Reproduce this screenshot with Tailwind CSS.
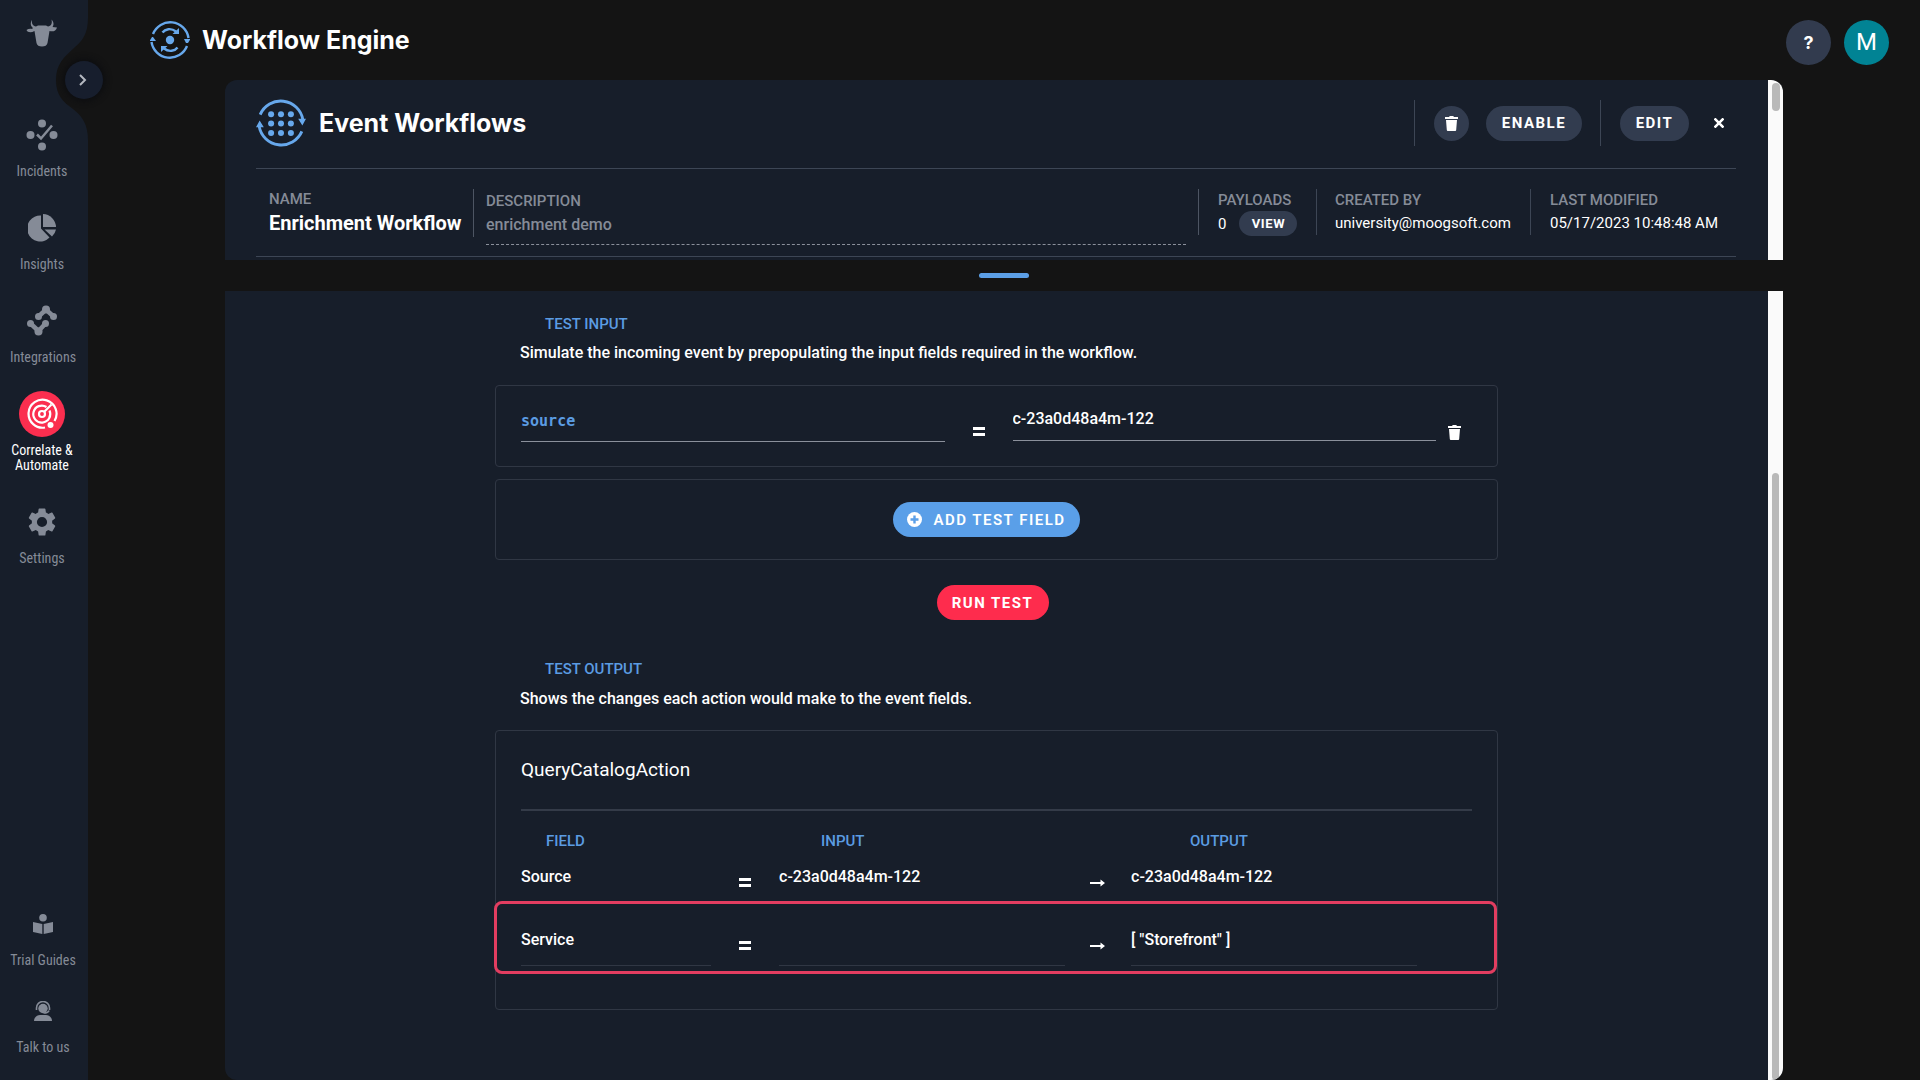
<!DOCTYPE html>
<html lang="en">
<head>
<meta charset="utf-8">
<title>Workflow Engine</title>
<script src="https://cdn.jsdelivr.net/npm/@tailwindcss/browser@4"></script>
</head>
<body class="flex min-h-screen bg-[#141414] font-[Roboto,sans-serif] text-white">

<!-- shared shapes -->
<svg class="hidden">
  <symbol id="trash" viewBox="0 0 13 15"><path fill="currentColor" d="M0 1h4l.8-1h3.4L9 1h4v2H0zM1 4h11l-.8 10a1 1 0 0 1-1 1H2.800a1 1 0 0 1-1-1z"/></symbol>
  <symbol id="equals" viewBox="0 0 12 9"><path fill="currentColor" d="M0 0h12v3H0zM0 6h12v3H0z"/></symbol>
  <symbol id="arrow" viewBox="0 0 15 8"><path fill="currentColor" d="M0 3h10.500V.5L15 4l-4.500 3.500V5H0z"/></symbol>
</svg>

<aside class="relative flex w-22 shrink-0 flex-col bg-[#171e2a] text-[#858b97]">
  <svg class="absolute top-0 right-0 h-[145px] w-8" viewBox="0 0 32 145"><path fill="#141414" d="M32 18C32 34 26 41 19 47C8 57 0 64 0 80C0 95 7 102 17 109C26 116 32 124 32 140Z"/></svg>
  <button aria-label="Expand menu" class="absolute top-[61px] left-[65px] flex size-[38px] items-center justify-center rounded-full bg-[#171e2d] pr-0.5 shadow-[0_0_6px_2px_#0c0d10]">
    <svg class="h-3 w-2" viewBox="0 0 8 12" fill="none" stroke="#b4b8c0" stroke-width="2"><path d="M1 1l5 5-5 5"/></svg>
  </button>

  <a href="#" aria-label="Home" class="mt-[18px] flex h-[30px] justify-center pr-1">
    <svg class="h-[29px] w-8" viewBox="0 0 32 29" fill="currentColor"><path d="M6 2C5.500 6 7 8 10 8.500L12 7.500H20L22 8.500C25 8 26.500 6 25.500 1.500C28 4 28 7 26.500 9L31 9.500C30 13 27 14 23.500 13L22.500 19L21.500 25C21 27.500 19 28.500 16 28.500C13 28.500 11 27.500 10.500 25L9.500 19L8.500 13C5 15 1.500 14.500 .5 12C2 11 4 10.500 6 11L7 10C4.500 8 4 5 6 2Z"/></svg>
  </a>

  <nav class="mt-16 flex flex-col gap-[26px] pr-1 text-center text-sm leading-[15px] font-[Roboto_Condensed,Roboto,sans-serif]">
    <a href="#" class="flex flex-col items-center gap-1.5">
      <span class="flex size-[46px] items-center justify-center"><svg class="size-8" viewBox="0 0 32 32" fill="currentColor"><circle cx="16" cy="4.500" r="4"/><circle cx="4.500" cy="16" r="4"/><circle cx="27.500" cy="16" r="4"/><circle cx="16" cy="27.500" r="4"/><path d="M11 15.500l4 4L26 6.500" fill="none" stroke="currentColor" stroke-width="2.500"/></svg></span>
      <span>Incidents</span>
    </a>
    <a href="#" class="flex flex-col items-center gap-1.5">
      <span class="flex size-[46px] items-center justify-center"><svg class="size-7" viewBox="0 0 28 28" fill="currentColor"><path d="M13 1.500V14.500L21.500 23.500A13 13 0 1 1 13 1.500Z"/><path d="M15 0A13.500 13.500 0 0 1 28 13H15Z"/><path d="M16.500 15.500H28A13 13 0 0 1 24 22.500Z"/></svg></span>
      <span>Insights</span>
    </a>
    <a href="#" class="flex flex-col items-center gap-1.5">
      <span class="flex size-[46px] items-center justify-center"><svg class="size-8" viewBox="0 0 32 32" fill="currentColor" stroke="currentColor"><g stroke="none"><circle cx="4.500" cy="18.500" r="3.500"/><circle cx="12.500" cy="26.500" r="4"/><circle cx="19.500" cy="18.500" r="3.500"/><circle cx="12.500" cy="11.500" r="3.500"/><circle cx="20" cy="4.500" r="4"/><circle cx="27.500" cy="11.500" r="3.500"/></g><path d="M4.500 18.500l8 7.500 7-7.500M12.500 11.500l7.500-7 7.500 7" fill="none" stroke-width="4.500"/></svg></span>
      <span class="pl-0.5">Integrations</span>
    </a>
    <a href="#" aria-current="page" class="flex flex-col items-center gap-1.5 text-white">
      <span class="flex size-[46px] items-center justify-center rounded-full bg-[#fb2e4f]"><svg class="size-8" viewBox="0 0 32 32" fill="none" stroke="currentColor" stroke-width="2.200"><path d="M19 29.500A14 14 0 1 1 28.500 23"/><path d="M20.500 9A8.500 8.500 0 1 0 23.500 12.500"/><circle cx="16" cy="16" r="3"/><path d="M18 14L25.500 6.500"/><circle cx="24.500" cy="27" r="3" fill="currentColor" stroke="none"/></svg></span>
      <span>Correlate &amp;<br>Automate</span>
    </a>
    <a href="#" class="flex flex-col items-center gap-1.5">
      <span class="flex size-[46px] items-center justify-center"><svg class="size-[34px]" viewBox="0 0 24 24" fill="currentColor"><path d="M19.140 12.940c.04-.3.060-.61.060-.94s-.02-.64-.07-.94l2.030-1.580a.49.49 0 0 0 .12-.61l-1.920-3.320a.49.49 0 0 0-.59-.22l-2.390.96a7 7 0 0 0-1.620-.94l-.36-2.540a.48.48 0 0 0-.48-.41h-3.840a.48.48 0 0 0-.47.410l-.36 2.540c-.59.240-1.130.570-1.620.94l-2.390-.96a.48.48 0 0 0-.59.220L2.740 8.870a.48.48 0 0 0 .12.610l2.030 1.580a6 6 0 0 0 0 1.880l-2.030 1.580a.49.49 0 0 0-.12.610l1.920 3.320c.12.220.370.290.59.220l2.390-.96c.5.380 1.030.7 1.620.94l.36 2.540c.05.240.240.410.48.410h3.840c.24 0 .44-.17.470-.41l.36-2.540a7 7 0 0 0 1.620-.94l2.390.96c.22.080.470 0 .59-.22l1.920-3.320a.48.48 0 0 0-.12-.61zM12 15.600a3.600 3.600 0 1 1 0-7.200 3.600 3.600 0 0 1 0 7.200z"/></svg></span>
      <span>Settings</span>
    </a>
  </nav>

  <nav class="mt-auto flex flex-col gap-5 pr-0.5 pb-[25px] text-center text-sm leading-[15px] font-[Roboto_Condensed,Roboto,sans-serif]">
    <a href="#" class="flex flex-col items-center gap-1.5">
      <span class="flex size-[46px] items-center justify-center"><svg class="size-5" viewBox="0 0 20 20" fill="currentColor"><circle cx="10" cy="3.800" r="3.800"/><path d="M0 8l9.300 2v10L0 18zM20 8l-9.300 2v10L20 18z"/></svg></span>
      <span>Trial Guides</span>
    </a>
    <a href="#" class="flex flex-col items-center gap-1.5">
      <span class="flex size-[46px] items-center justify-center"><svg class="h-5 w-[18px]" viewBox="0 0 18 20" fill="currentColor"><circle cx="9" cy="7.500" r="4.700"/><path d="M2.500 9V7A6.500 6.500 0 0 1 15.500 7V9M15 9.500C14.500 11.500 12 12 9.500 12" fill="none" stroke="currentColor" stroke-width="1.600"/><path d="M0 20C0 16.500 3 14 6 14h6c3 0 6 2.500 6 6z"/></svg></span>
      <span>Talk to us</span>
    </a>
  </nav>
</aside>

<div class="flex min-w-0 flex-1 flex-col">
  <header class="flex h-20 items-center pr-[31px] pl-[62px]">
    <svg class="size-10" viewBox="0 0 40 40" fill="none" stroke="#67a8ec" stroke-width="2.400"><path d="M3 14A18.500 18.500 0 0 1 38.500 18"/><path d="M37 26A18.500 18.500 0 0 1 1.500 22"/><path d="M12.500 12.500C15 9 21 7.500 26 11.500M27.500 27.500C25 31 19 32.500 14 28.500"/><g fill="#67a8ec" stroke="none"><circle cx="20" cy="20" r="4.200"/><path d="M34 19h6.500l-2.500 4h-2zM-.5 21h6.500l-3-4h-1zM29 8v6h-6.500zM11 32v-6h6.500z"/></g></svg>
    <h1 class="ml-3 font-[Inter,sans-serif] text-[25px] leading-8 font-bold">Workflow Engine</h1>
    <div class="ml-auto flex gap-[13px] pt-1">
      <button aria-label="Help" class="size-[45px] rounded-full bg-[#323b4e] pt-0.5 font-[Inter,sans-serif] text-lg font-bold">?</button>
      <button aria-label="Account" class="size-[45px] rounded-full bg-[#018394] text-2xl">M</button>
    </div>
  </header>

  <main class="flex flex-1 flex-col px-[137px]">
    <section class="flex overflow-hidden rounded-t-xl bg-[#171e2a]">
      <div class="flex h-[180px] min-w-0 flex-1 flex-col pr-8 pl-[31px]">
        <div class="flex h-[89px] items-center border-b border-[#3d4655] pb-0.5">
          <svg class="size-[50px]" viewBox="0 0 48 48" fill="none" stroke="#67a8ec" stroke-width="2.800"><path d="M4 16A21.500 21.500 0 0 1 45 21"/><path d="M44 32A21.500 21.500 0 0 1 3 27"/><g fill="#67a8ec" stroke="none"><path d="M40.500 20h7.500l-3.500 6.500zM0 28h7.500l-4-6.500z"/><circle cx="14.500" cy="15.500" r="2.900"/><circle cx="24" cy="15.500" r="2.900"/><circle cx="33.500" cy="15.500" r="2.900"/><circle cx="14.500" cy="24.500" r="2.900"/><circle cx="24" cy="24.500" r="2.900"/><circle cx="33.500" cy="24.500" r="2.900"/><circle cx="14.500" cy="33.500" r="2.900"/><circle cx="24" cy="33.500" r="2.900"/><circle cx="33.500" cy="33.500" r="2.900"/></g></svg>
          <h2 class="ml-[13px] font-[Inter,sans-serif] text-[25px] leading-8 font-bold">Event Workflows</h2>
          <div class="ml-auto flex items-center text-[15px] font-bold tracking-widest">
            <span class="h-[46px] w-px bg-[#3d4655]"></span>
            <button aria-label="Delete workflow" class="ml-[19px] flex size-[35px] items-center justify-center rounded-full bg-[#323c4f]"><svg class="h-[15px] w-[13px]"><use href="#trash"/></svg></button>
            <button class="ml-[17px] h-[35px] w-24 rounded-full bg-[#323c4f]">ENABLE</button>
            <span class="ml-[18px] h-[46px] w-px bg-[#3d4655]"></span>
            <button class="ml-[19px] h-[35px] w-[69px] rounded-full bg-[#323c4f]">EDIT</button>
            <button aria-label="Close" class="mr-3 ml-[25px]"><svg class="size-[10px]" viewBox="0 0 10 10" stroke="currentColor" stroke-width="2.600"><path d="M.5.5l9 9M9.500.5l-9 9"/></svg></button>
          </div>
        </div>

        <div class="flex h-[88px] items-start border-b border-[#3d4655] pt-5 pl-[13px] leading-5">
          <div class="w-[205px] border-r border-[#4d5563]">
            <div class="text-[15px] font-medium text-[#858b97]">NAME</div>
            <div class="mt-1 pb-1 text-xl leading-5 font-bold whitespace-nowrap">Enrichment Workflow</div>
          </div>
          <div class="ml-3 flex-1 border-b border-dashed border-[#8b909b] pt-0.5 pb-[9px] font-medium text-[#858b97]">
            <div class="text-[15px]">DESCRIPTION</div>
            <div class="mt-1 text-base leading-5">enrichment demo</div>
          </div>
          <dl class="ml-3 flex text-[15px]">
            <div class="h-[46px] w-[118px] border-l border-[#4d5563] pl-[19px]">
              <dt class="leading-[22px] font-medium text-[#858b97]">PAYLOADS</dt>
              <dd class="flex items-center gap-[13px]">0 <button class="h-[25px] w-[58px] rounded-full bg-[#323c4f] text-[13px] font-bold tracking-wider">VIEW</button></dd>
            </div>
            <div class="h-[46px] w-[214px] border-l border-[#3d4655] pl-[18px]">
              <dt class="leading-[22px] font-medium text-[#858b97]">CREATED BY</dt>
              <dd class="mt-0.5">university@moogsoft.com</dd>
            </div>
            <div class="h-[46px] w-[206px] border-l border-[#3d4655] pl-[19px] whitespace-nowrap">
              <dt class="leading-[22px] font-medium text-[#858b97]">LAST MODIFIED</dt>
              <dd class="mt-0.5">05/17/2023 10:48:48 AM</dd>
            </div>
          </dl>
        </div>
      </div>
      <div class="w-[15px] bg-[#fafafa] px-1 pt-[3px]"><div class="h-7 w-2 rounded-full bg-[#b9b9b9]"></div></div>
    </section>

    <div class="flex h-[31px] items-center justify-center"><span class="h-[5px] w-[50px] rounded-full bg-[#5c9fe6]"></span></div>

    <section class="flex flex-1 overflow-hidden rounded-b-xl bg-[#171e2a]">
      <div class="min-w-0 flex-1">
        <div class="mx-auto w-[65%] pt-[23px] text-base leading-5 font-medium">
          <h3 class="pl-[50px] text-[15px] leading-5 text-[#5b9ce2]">TEST INPUT</h3>
          <p class="mt-[9px] pl-[25px]">Simulate the incoming event by prepopulating the input fields required in the workflow.</p>

          <div class="mt-[22px] flex h-[82px] items-start rounded border border-[#303744] pt-5 pr-9 pl-[25px]">
            <input aria-label="Field name" value="source" class="h-9 min-w-0 flex-1 border-b border-[#8b909b] pb-1.5 font-['DejaVu_Sans_Mono',monospace] text-[15px] font-bold text-[#5b9ce2]">
            <svg class="mx-7 mt-[21px] h-[9px] w-3"><use href="#equals"/></svg>
            <input aria-label="Field value" value="c-23a0d48a4m-122" class="h-[35px] min-w-0 flex-1 border-b border-[#8b909b] pb-2.5">
            <button aria-label="Remove field" class="mt-[19px] ml-3"><svg class="h-[15px] w-[13px]"><use href="#trash"/></svg></button>
          </div>

          <div class="mt-3 flex h-[81px] items-center justify-center rounded border border-[#303744] pr-5">
            <button class="flex h-[35px] w-[187px] items-center justify-center gap-[11px] rounded-full bg-[#5a9fe8] text-[15px] font-semibold tracking-widest">
              <svg class="size-[15px]" viewBox="0 0 15 15"><circle cx="7.500" cy="7.500" r="7.500" fill="#fff"/><path d="M7.500 3.500v8M3.500 7.500h8" stroke="#5a9fe8" stroke-width="2.400"/></svg>ADD TEST FIELD
            </button>
          </div>

          <div class="mt-[25px] flex justify-center pr-2">
            <button class="h-[35px] w-28 rounded-full bg-[#fe2c4d] text-[15px] font-bold tracking-widest">RUN TEST</button>
          </div>

          <h3 class="mt-[39px] pl-[50px] text-[15px] leading-5 text-[#5b9ce2]">TEST OUTPUT</h3>
          <p class="mt-[10px] pl-[25px]">Shows the changes each action would make to the event fields.</p>

          <div class="relative mt-[21px] h-[280px] rounded border border-[#303744] px-[25px] pt-[29px]">
            <h4 class="border-b-2 border-[#343b48] pb-[29px] text-[19px] leading-5 font-normal">QueryCatalogAction</h4>
            <table class="w-full table-fixed text-left">
              <colgroup><col class="w-[190px]"><col class="w-[68px]"><col class="w-[286px]"><col class="w-[66px]"><col class="w-[286px]"><col></colgroup>
              <thead>
                <tr class="h-[41px] text-[15px] text-[#5b9ce2]">
                  <th class="pt-5 pl-[25px] align-top font-medium">FIELD</th><td></td>
                  <th class="pt-5 pl-[42px] align-top font-medium">INPUT</th><td></td>
                  <th class="pt-5 pl-[59px] align-top font-medium">OUTPUT</th><td></td>
                </tr>
              </thead>
              <tbody>
                <tr class="h-[63px] align-top">
                  <td><div class="h-[51px] border-b border-[#303744] pt-[15px]">Source</div></td>
                  <td class="pt-[26px] pl-7"><svg class="h-[9px] w-3"><use href="#equals"/></svg></td>
                  <td><div class="h-[51px] border-b border-[#303744] pt-[15px]">c-23a0d48a4m-122</div></td>
                  <td class="pt-[27px] pl-[25px]"><svg class="h-2 w-[15px]"><use href="#arrow"/></svg></td>
                  <td><div class="h-[51px] border-b border-[#303744] pt-[15px]">c-23a0d48a4m-122</div></td>
                  <td></td>
                </tr>
                <tr class="h-[63px] align-top">
                  <td><div class="h-[51px] border-b border-[#303744] pt-[15px]">Service</div></td>
                  <td class="pt-[26px] pl-7"><svg class="h-[9px] w-3"><use href="#equals"/></svg></td>
                  <td><div class="h-[51px] border-b border-[#303744] pt-[15px]"></div></td>
                  <td class="pt-[27px] pl-[25px]"><svg class="h-2 w-[15px]"><use href="#arrow"/></svg></td>
                  <td><div class="h-[51px] border-b border-[#303744] pt-[15px]">[ "Storefront" ]</div></td>
                  <td></td>
                </tr>
              </tbody>
            </table>
            <div class="pointer-events-none absolute top-[170px] right-0 -left-0.5 h-[73px] rounded-lg border-3 border-[#e23d60]"></div>
          </div>
        </div>
      </div>
      <div class="flex w-[15px] bg-[#fafafa] px-1 pt-[182px]"><div class="w-2 rounded-full bg-[#b9b9b9]"></div></div>
    </section>
  </main>
</div>
</body>
</html>
